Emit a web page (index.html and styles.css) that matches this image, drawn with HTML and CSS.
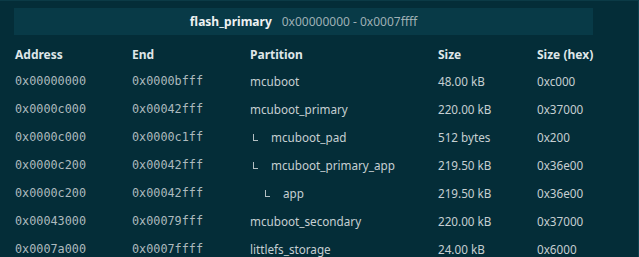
FILE: index.html
```html
<!DOCTYPE html>
<html>
<head>
<meta charset="utf-8">
<link rel="stylesheet" href="styles.css">
</head>
<body>
<div class="panel">
  <div class="bar">
    <span class="bar-title">flash_primary</span>
    <span class="bar-range">0x00000000 - 0x0007ffff</span>
  </div>
  <table class="parts">
    <thead>
      <tr>
        <th class="c-addr">Address</th>
        <th class="c-end">End</th>
        <th class="c-name">Partition</th>
        <th class="c-size">Size</th>
        <th class="c-hex">Size (hex)</th>
      </tr>
    </thead>
    <tbody>
      <tr><td class="mono">0x00000000</td><td class="mono">0x0000bfff</td><td>mcuboot</td><td>48.00 kB</td><td>0xc000</td></tr>
      <tr><td class="mono">0x0000c000</td><td class="mono">0x00042fff</td><td>mcuboot_primary</td><td>220.00 kB</td><td>0x37000</td></tr>
      <tr><td class="mono">0x0000c000</td><td class="mono">0x0000c1ff</td><td><span class="tree l1"></span>mcuboot_pad</td><td>512 bytes</td><td>0x200</td></tr>
      <tr><td class="mono">0x0000c200</td><td class="mono">0x00042fff</td><td><span class="tree l1"></span>mcuboot_primary_app</td><td>219.50 kB</td><td>0x36e00</td></tr>
      <tr><td class="mono">0x0000c200</td><td class="mono">0x00042fff</td><td><span class="tree l2"></span>app</td><td>219.50 kB</td><td>0x36e00</td></tr>
      <tr><td class="mono">0x00043000</td><td class="mono">0x00079fff</td><td>mcuboot_secondary</td><td>220.00 kB</td><td>0x37000</td></tr>
      <tr><td class="mono">0x0007a000</td><td class="mono">0x0007ffff</td><td>littlefs_storage</td><td>24.00 kB</td><td>0x6000</td></tr>
    </tbody>
  </table>
</div>
</body>
</html>
```
FILE: styles.css
```css
html, body {
  margin: 0;
  padding: 0;
  background: #042d38;
  height: 100%;
  overflow: hidden;
}
.panel {
  box-sizing: border-box;
  height: 257px;
  padding: 8px 0 0 14px;
  border-top: 1px solid #0b3a46;
  border-right: 1px solid #0e4250;
  font-family: "Noto Sans", "Open Sans", sans-serif;
  font-size: 11.7px;
  color: #c6cfd2;
}
.bar {
  width: 579px;
  height: 27px;
  margin-top: -1px;
  background: #083a47;
  display: flex;
  align-items: center;
  justify-content: center;
  gap: 10px;
}
.bar-title {
  font-weight: 700;
  color: #eef2f3;
  font-size: 12px;
}
.bar-range {
  color: #9fb0b5;
  font-size: 12px;
}
.parts {
  border-collapse: collapse;
  table-layout: fixed;
  width: 623px;
  margin: 6px 0 0 1px;
}
.parts th, .parts td {
  padding: 0;
  text-align: left;
  white-space: nowrap;
}
.parts th {
  height: 26px;
  font-weight: 700;
  color: #dfe6e8;
  font-size: 12px;
}
.parts td {
  height: 28px;
}
.c-addr { width: 117px; }
.c-end { width: 118px; }
.c-name { width: 188px; }
.c-size { width: 99px; }
.mono {
  font-family: "DejaVu Sans Mono", "Liberation Mono", monospace;
  font-size: 11.8px;
  color: #adbabe;
}
.tree {
  display: inline-block;
  box-sizing: border-box;
  width: 5px;
  height: 7px;
  border-left: 1px solid #b3bfc2;
  border-bottom: 1px solid #b3bfc2;
  vertical-align: 1px;
  margin-right: 13px;
}
.l1 { margin-left: 3px; }
.l2 { margin-left: 15px; }
```
